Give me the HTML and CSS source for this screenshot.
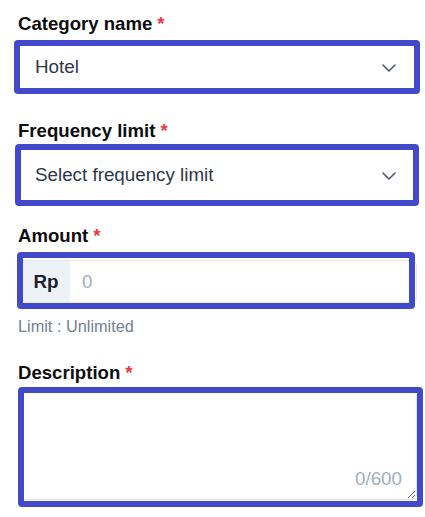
FILE: index.html
```html
<!DOCTYPE html>
<html lang="en">
<head>
<meta charset="utf-8">
<title>Category form</title>
<link rel="stylesheet" href="styles.css">
</head>
<body>
<form class="form">
  <div class="field field-category">
    <label class="label">Category name<span class="req">*</span></label>
    <div class="wrap hl-1">
      <div class="select select-1">
        <span class="value">Hotel</span>
        <svg class="chev" width="14" height="8" viewBox="0 0 14 8"><path d="M1 1 L7 7 L13 1" fill="none" stroke="#4a5568" stroke-width="1.5" stroke-linecap="round" stroke-linejoin="round"/></svg>
      </div>
    </div>
  </div>

  <div class="field field-frequency">
    <label class="label">Frequency limit<span class="req">*</span></label>
    <div class="wrap hl-2">
      <div class="select select-2">
        <span class="value">Select frequency limit</span>
        <svg class="chev" width="14" height="8" viewBox="0 0 14 8"><path d="M1 1 L7 7 L13 1" fill="none" stroke="#4a5568" stroke-width="1.5" stroke-linecap="round" stroke-linejoin="round"/></svg>
      </div>
    </div>
  </div>

  <div class="field field-amount">
    <label class="label">Amount<span class="req">*</span></label>
    <div class="wrap hl-3">
      <div class="input-group">
        <span class="addon">Rp</span>
        <span class="placeholder">0</span>
      </div>
    </div>
    <p class="hint">Limit : Unlimited</p>
  </div>

  <div class="field field-desc">
    <label class="label">Description<span class="req">*</span></label>
    <div class="wrap hl-4">
      <textarea class="textarea"></textarea>
      <span class="counter">0/600</span>
    </div>
  </div>
</form>
</body>
</html>
```

FILE: styles.css
```css
html, body {
  margin: 0;
  padding: 0;
  background: #ffffff;
}

body {
  font-family: "Liberation Sans", Arial, sans-serif;
  color: #111111;
}

.form {
  display: flex;
  flex-direction: column;
  padding: 13px 0 17px 18px;
  width: 399px;
}

.field {
  display: flex;
  flex-direction: column;
}

.label {
  display: block;
  font-size: 18.6px;
  line-height: 22px;
  font-weight: 700;
  color: #0d0d0d;
}

.req {
  color: #e53e3e;
  margin-left: 5px;
}

.wrap {
  position: relative;
}

.wrap::after {
  content: "";
  position: absolute;
  border: 6px solid #4249cb;
  border-radius: 4px;
  pointer-events: none;
}

.select {
  box-sizing: border-box;
  display: flex;
  align-items: center;
  justify-content: space-between;
  width: 399px;
  border: 1px solid #e2e8f0;
  border-radius: 6px;
  padding: 0 20px 0 16px;
  font-size: 18.8px;
  color: #2d3748;
  background: #ffffff;
}

.chev {
  display: block;
  flex: none;
  margin-top: 1px;
}

/* Category */
.field-category .wrap { margin-top: 7px; }
.select-1 { height: 50px; }
.hl-1::after { top: -2px; left: -4px; right: -3px; bottom: -2px; }

/* Frequency */
.field-frequency { margin-top: 28px; }
.field-frequency .wrap { margin-top: 5px; }
.select-2 { height: 56px; }
.hl-2::after { top: -3px; left: -3px; right: -2px; bottom: -3px; }

/* Amount */
.field-amount { margin-top: 22px; }
.field-amount .wrap { margin-top: 13px; }
.hl-3::after { top: -8px; left: -1px; right: 2px; bottom: -6px; }

.input-group {
  box-sizing: border-box;
  display: flex;
  align-items: stretch;
  width: 399px;
  height: 43px;
  border: 1px solid #e2e8f0;
  border-radius: 6px;
  overflow: hidden;
  background: #ffffff;
}

.addon {
  box-sizing: border-box;
  display: flex;
  align-items: center;
  width: 51px;
  padding-left: 14.5px;
  background: #edf2f7;
  font-size: 18.8px;
  font-weight: 700;
  color: #1a202c;
}

.placeholder {
  display: flex;
  align-items: center;
  padding-left: 12px;
  font-size: 18.8px;
  color: #a0aec0;
}

.hint {
  margin: 13px 0 0;
  font-size: 16.3px;
  line-height: 20px;
  color: #718096;
}

/* Description */
.field-desc { margin-top: 26px; }
.field-desc .wrap { margin-top: 7px; }
.hl-4::after { top: -4px; left: 0; right: -6px; bottom: -7px; }

.textarea {
  display: block;
  box-sizing: border-box;
  width: 399px;
  height: 109px;
  margin: 0;
  border: 1px solid #e2e8f0;
  border-radius: 6px;
  resize: vertical;
  font-family: "Liberation Sans", Arial, sans-serif;
  font-size: 18.8px;
  background: #ffffff;
  outline: none;
}

.counter {
  position: absolute;
  right: 15px;
  bottom: 10px;
  font-size: 18.8px;
  line-height: 22px;
  color: #a0aec0;
}
```
